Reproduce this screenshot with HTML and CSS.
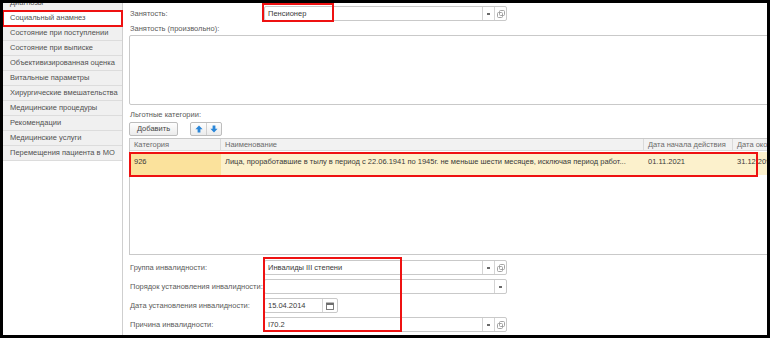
FILE: index.html
```html
<!DOCTYPE html>
<html lang="ru">
<head>
<meta charset="utf-8">
<title>Социальный анамнез</title>
<link rel="stylesheet" href="styles.css">
</head>
<body>
<div class="frame">
  <nav class="sidebar">
    <div class="nav-item cut">Диагнозы</div>
    <div class="nav-item active">Социальный анамнез</div>
    <div class="nav-item">Состояние при поступлении</div>
    <div class="nav-item">Состояние при выписке</div>
    <div class="nav-item">Объективизированная оценка</div>
    <div class="nav-item">Витальные параметры</div>
    <div class="nav-item">Хирургические вмешательства</div>
    <div class="nav-item">Медицинские процедуры</div>
    <div class="nav-item">Рекомендации</div>
    <div class="nav-item">Медицинские услуги</div>
    <div class="nav-item">Перемещения пациента в МО</div>
  </nav>

  <main class="main">
    <div class="field-row first">
      <span class="lbl">Занятость:</span>
      <div class="input wide">
        <span class="val">Пенсионер</span>
        <span class="ibtn dd"><i class="dot"></i></span>
        <span class="ibtn"><svg class="open-ic" viewBox="0 0 8 8" width="8" height="8"><rect x="0.5" y="2.5" width="5" height="5" rx="1" fill="none" stroke="#9a9a9a" stroke-width="0.9"/><rect x="2.5" y="0.5" width="5" height="5" rx="1" fill="none" stroke="#9a9a9a" stroke-width="0.9"/></svg></span>
      </div>
    </div>

    <div class="lbl block">Занятость (произвольно):</div>
    <div class="textarea"></div>

    <div class="lbl block sect">Льготные категории:</div>
    <div class="toolbar">
      <button class="cmd">Добавить</button>
      <div class="arrows">
        <button class="arr"><svg viewBox="0 0 8 8" width="8" height="8"><path d="M4 0.5 L7.6 4.2 H5.4 V7.6 H2.6 V4.2 H0.4 Z" fill="#2a86d8"/></svg></button>
        <button class="arr"><svg viewBox="0 0 8 8" width="8" height="8"><path d="M4 7.5 L7.6 3.8 H5.4 V0.4 H2.6 V3.8 H0.4 Z" fill="#2a86d8"/></svg></button>
      </div>
    </div>

    <div class="table">
      <div class="thead">
        <div class="c c1">Категория</div>
        <div class="c c2">Наименование</div>
        <div class="c c3">Дата начала действия</div>
        <div class="c c4">Дата окончания действия</div>
      </div>
      <div class="trow">
        <div class="c c1 cur">926</div>
        <div class="c c2">Лица, проработавшие в тылу в период с 22.06.1941 по 1945г. не меньше шести месяцев, исключая период работ...</div>
        <div class="c c3">01.11.2021</div>
        <div class="c c4">31.12.2099</div>
      </div>
    </div>

    <div class="field-row gap-top">
      <span class="lbl">Группа инвалидности:</span>
      <div class="input wide">
        <span class="val">Инвалиды III степени</span>
        <span class="ibtn dd"><i class="dot"></i></span>
        <span class="ibtn"><svg class="open-ic" viewBox="0 0 8 8" width="8" height="8"><rect x="0.5" y="2.5" width="5" height="5" rx="1" fill="none" stroke="#9a9a9a" stroke-width="0.9"/><rect x="2.5" y="0.5" width="5" height="5" rx="1" fill="none" stroke="#9a9a9a" stroke-width="0.9"/></svg></span>
      </div>
    </div>
    <div class="field-row">
      <span class="lbl">Порядок установления инвалидности:</span>
      <div class="input wide">
        <span class="val"></span>
        <span class="ibtn dd"><i class="dot"></i></span>
      </div>
    </div>
    <div class="field-row">
      <span class="lbl">Дата установления инвалидности:</span>
      <div class="input date">
        <span class="val">15.04.2014</span>
        <span class="ibtn cal"><svg viewBox="0 0 8 8" width="8" height="8"><rect x="0.5" y="1" width="7" height="6.5" fill="none" stroke="#6d6d6d" stroke-width="0.9"/><rect x="0.5" y="1" width="7" height="2" fill="#6d6d6d"/></svg></span>
      </div>
    </div>
    <div class="field-row">
      <span class="lbl">Причина инвалидности:</span>
      <div class="input wide">
        <span class="val">I70.2</span>
        <span class="ibtn dd"><i class="dot"></i></span>
        <span class="ibtn"><svg class="open-ic" viewBox="0 0 8 8" width="8" height="8"><rect x="0.5" y="2.5" width="5" height="5" rx="1" fill="none" stroke="#9a9a9a" stroke-width="0.9"/><rect x="2.5" y="0.5" width="5" height="5" rx="1" fill="none" stroke="#9a9a9a" stroke-width="0.9"/></svg></span>
      </div>
    </div>
  </main>

  <div class="mark mark-job"></div>
  <div class="mark mark-row"></div>
  <div class="mark mark-dis"></div>
</div>
</body>
</html>
```

FILE: styles.css
```css
* { box-sizing: border-box; margin: 0; padding: 0; }
html, body { background: #fff; }
body {
  margin: 0;
  font-family: "Liberation Sans", Arial, sans-serif;
  font-size: 7.5px;
  color: #555;
}

.frame {
  position: relative;
  width: 770px;
  height: 338px;
  border: 3px solid #000;
  overflow: hidden;
  display: flex;
  background: #fff;
}

/* sidebar */
.sidebar {
  width: 120px;
  flex: none;
  border-right: 1px solid #cfcfcf;
  display: flex;
  flex-direction: column;
}
.nav-item {
  height: 15px;
  line-height: 14px;
  padding-left: 7px;
  background: #f0f0f0;
  border-bottom: 1px solid #dcdcdc;
  color: #505050;
  white-space: nowrap;
  overflow: hidden;
}
.nav-item.cut { margin-top: -7px; }
.nav-item.active {
  background: #fff;
  outline: 2px solid #ee1111;
  outline-offset: -1px;
  position: relative;
  z-index: 1;
}

/* main */
.main {
  flex: 1;
  min-width: 0;
  overflow: hidden;
  padding: 3px 0 0 6px;
  display: flex;
  flex-direction: column;
}
.lbl { color: #5a5a5a; white-space: nowrap; }
.lbl.block { height: 12px; line-height: 12px; margin-top: 2px; padding-left: 1px; }
.lbl.sect { margin-top: 4px; }

.field-row {
  display: flex;
  align-items: center;
  height: 15px;
  margin-top: 4px;
  flex: none;
}
.field-row.first { margin-top: 0; }
.field-row.gap-top { margin-top: 5px; }
.field-row .lbl { width: 135px; flex: none; padding-left: 1px; }

.input {
  height: 15px;
  display: flex;
  border: 1px solid #c9c9c9;
  border-radius: 2px;
  background: #fff;
}
.input.wide { width: 243px; }
.input.date { width: 74px; }
.val {
  flex: 1;
  padding-left: 3px;
  line-height: 13px;
  color: #3a3a3a;
  white-space: nowrap;
}
.ibtn {
  width: 12px;
  flex: none;
  border-left: 1px solid #d4d4d4;
  display: flex;
  align-items: center;
  justify-content: center;
}
.ibtn.cal { width: 15px; }
.dot {
  display: block;
  width: 3px;
  height: 2px;
  background: #6a6a6a;
}

.textarea {
  width: 760px;
  height: 70px;
  border: 1px solid #c9c9c9;
  border-radius: 2px;
  flex: none;
}

.toolbar {
  display: flex;
  height: 14px;
  margin-top: 1px;
  flex: none;
}
.cmd {
  width: 49px;
  height: 14px;
  border: 1px solid #bdbdbd;
  border-radius: 2px;
  background: linear-gradient(#fefefe, #ececec);
  font: inherit;
  color: #444;
  line-height: 12px;
}
.arrows {
  display: flex;
  margin-left: 12px;
  border: 1px solid #bdbdbd;
  border-radius: 2px;
  background: linear-gradient(#fefefe, #ececec);
}
.arr {
  width: 15px;
  height: 12px;
  border: none;
  background: transparent;
  display: flex;
  align-items: center;
  justify-content: center;
}
.arr + .arr { border-left: 1px solid #d0d0d0; }

.table {
  width: 760px;
  height: 117px;
  margin-top: 2px;
  border: 1px solid #c9c9c9;
  flex: none;
}
.thead, .trow { display: flex; }
.thead {
  height: 12px;
  background: #f2f2f2;
  border-bottom: 1px solid #dadada;
  color: #6a6a6a;
  line-height: 11px;
}
.c { flex: none; white-space: nowrap; overflow: hidden; padding-left: 4px; }
.thead .c { border-right: 1px solid #dadada; }
.c1 { width: 91px; }
.c2 { width: 423px; }
.c3 { width: 89px; }
.c4 { width: 95px; }
.trow {
  height: 23px;
  margin-top: 1px;
  background: #fcf1cc;
  color: #3a3a3a;
  line-height: 12px;
}
.trow .c { padding-top: 4px; }
.trow .cur { background: #fbe29c; }

/* annotation boxes */
.mark {
  position: absolute;
  border: 2px solid #ee1111;
  pointer-events: none;
}
.mark-job { left: 259px; top: 0; width: 72px; height: 19px; }
.mark-row { left: 126px; top: 149px; width: 629px; height: 25px; }
.mark-dis { left: 260px; top: 254px; width: 139px; height: 75px; }
```
